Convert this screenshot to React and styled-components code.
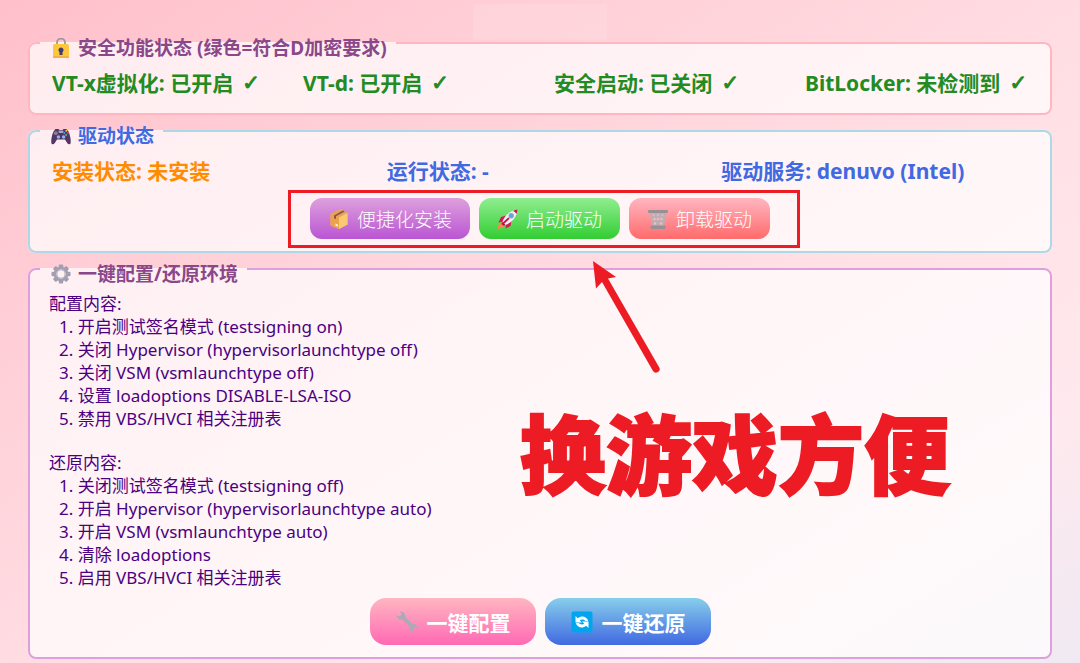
import React from "react";
import styled, { createGlobalStyle } from "styled-components";

const securityItems = [
  "VT-x虚拟化: 已开启",
  "VT-d: 已开启",
  "安全启动: 已关闭",
  "BitLocker: 未检测到",
];

const configSteps = [
  "开启测试签名模式 (testsigning on)",
  "关闭 Hypervisor (hypervisorlaunchtype off)",
  "关闭 VSM (vsmlaunchtype off)",
  "设置 loadoptions DISABLE-LSA-ISO",
  "禁用 VBS/HVCI 相关注册表",
];

const restoreSteps = [
  "关闭测试签名模式 (testsigning off)",
  "开启 Hypervisor (hypervisorlaunchtype auto)",
  "开启 VSM (vsmlaunchtype auto)",
  "清除 loadoptions",
  "启用 VBS/HVCI 相关注册表",
];

function LockIcon() {
  return (
    <Icon viewBox="0 0 20 20" $size={20}>
      <path d="M6 8V4.500a4 4 0 0 1 8 0V8" fill="none" stroke="#9b9b9b" strokeWidth="1.800" />
      <rect x="2" y="6" width="16" height="14" rx="1.500" fill="#fcc63d" />
      <rect x="2" y="18" width="16" height="2" rx="1" fill="#f5b13c" />
      <path d="M10 9.500a2.600 2.600 0 0 1 1.500 4.700V17h-3v-2.800A2.600 2.600 0 0 1 10 9.500z" fill="#433b6b" />
    </Icon>
  );
}

function GamepadIcon() {
  return (
    <Icon viewBox="0 0 20 20" $size={20}>
      <path
        d="M4.5 3h3l1 1h3l1-1h3l2 2.5c1.600 3.500 2.500 8 2.200 11.200-.3 2-2.500 2-3.500.3l-2.200-3.500H6L3.800 17c-1 1.700-3.200 1.700-3.500-.3C0 13.500.9 9 2.500 5.500z"
        fill="#533566"
      />
      <rect x="7.500" y="4.500" width="5" height="2.500" rx="1" fill="#a9a3c9" />
      <circle cx="4.800" cy="7.200" r="1.900" fill="#837f9c" />
      <circle cx="7.400" cy="11" r="1.700" fill="#8db7ef" />
      <circle cx="12.600" cy="11" r="1.700" fill="#8db7ef" />
      <circle cx="15.300" cy="4.800" r="1" fill="#f8c842" />
      <circle cx="17" cy="7" r="1.100" fill="#ed3b4c" />
      <circle cx="13.400" cy="6.900" r="1" fill="#3b9be8" />
      <circle cx="15.200" cy="8.900" r="1" fill="#49bd76" />
    </Icon>
  );
}

function GearIcon() {
  return (
    <Icon viewBox="0 0 20 20" $size={20}>
      {[0, 45, 90, 135, 180, 225, 270, 315].map((angle) => (
        <rect
          key={angle}
          x="7.800"
          y="0.500"
          width="4.400"
          height="5"
          rx="1"
          fill="#a29db0"
          transform={`rotate(${angle} 10 10)`}
        />
      ))}
      <circle cx="10" cy="10" r="5.500" fill="none" stroke="#a39eb1" strokeWidth="3.600" />
      <circle cx="10" cy="10" r="4.600" fill="none" stroke="#c3bdcc" strokeWidth="1" />
    </Icon>
  );
}

function PackageIcon() {
  return (
    <Icon viewBox="0 0 22 22" $size={22}>
      <path d="M2.500 6 12 1l7.500 4v11.500L11 21l-8.500-3.500z" fill="#f0ad55" />
      <path d="M2.500 6 12 1l7.500 4L11 9.500z" fill="#e5a45d" />
      <path d="M11 9.500 19.500 5v11.500L11 21z" fill="#fac971" />
      <path d="M2.500 6 11 9.500V21l-8.500-3.500z" fill="#eba24c" />
      <path d="M6 7.400 14.800 2.500l2 1L8 8.300v3l-2-1z" fill="#8f5447" />
      <path d="m7.500 15.500 2.500.9v2.400l-2.500-1z" fill="#fff0dc" />
    </Icon>
  );
}

function RocketIcon() {
  return (
    <Icon viewBox="0 0 22 22" $size={22}>
      <path d="M1 18 3 15l3-1 2.500 3-2.500 3-2-.500L1 21.500z" fill="#f78b4b" />
      <path d="M9.500 7.500 4 9l-2.500 5.500 5-1zM14.500 12.500 13.500 18 8.500 20.500l.5-5z" fill="#d51b4f" />
      <path d="M5.500 14C7 8.500 11.500 3 20.500 1.500 20 9.500 14 15 8.500 17z" fill="#f3eff7" />
      <path d="M16 2.900c1.500-.7 3-1.200 4.500-1.400-.1 1.700-.5 3.200-1.100 4.600C18.800 4.500 17.600 3.400 16 2.900z" fill="#c81545" />
      <path d="m5.500 14 3 3-2 .8-2-2z" fill="#83234e" />
      <circle cx="14.200" cy="7.800" r="2.700" fill="#8fa2bd" />
      <circle cx="14.200" cy="7.800" r="1.600" fill="#47aee8" />
      <path d="m5.500 16 6-5.500" stroke="#c81545" strokeWidth="1.800" strokeLinecap="round" />
    </Icon>
  );
}

function TrashIcon() {
  return (
    <Icon viewBox="0 0 22 22" $size={22}>
      <path d="M3 4.500h16L17 19H5z" fill="#bfadb3" />
      <path
        d="m5 6.500 1.500 1.500L8 6.500M9.500 6.500 11 8l1.500-1.500M14 6.500 15.500 8 17 6.500M6 11l1.500-1.500L9 11l-1.500 1.500zM9.500 11 11 9.500l1.500 1.500-1.500 1.500zM13 11l1.500-1.500L16 11l-1.500 1.500zM6.500 15.500 8 14l1.500 1.500L8 17zM12.500 15.500 14 14l1.500 1.500L14 17z"
        fill="#f0bfc5"
      />
      <rect x="1" y="2" width="20" height="3" rx="1" fill="#989096" />
      <rect x="3.500" y="17.500" width="15" height="3.500" rx="1" fill="#989096" />
    </Icon>
  );
}

function WrenchIcon() {
  return (
    <Icon viewBox="0 0 24 24" $size={24}>
      <path
        d="M5.200 1.500c3-.2 5.600 2.400 5.200 5.500l6.900 6.900c3-.4 5.500 1.900 5.700 5l-3.200-1.600-2.100 1.900 1.700 3.400c-3.200 0-5.600-2.700-5.100-5.800L7.400 9.900C4.400 10.300 1.600 8 1.200 5l3.300 1.500 2-1.900z"
        fill="#adaab8"
      />
    </Icon>
  );
}

function RestoreIcon() {
  return (
    <Icon viewBox="0 0 24 24" $size={24}>
      <rect x="1.500" y="1.500" width="21" height="21" rx="2" fill="#00a6ed" />
      <path d="M5.500 6v6.500H12l-2.300-2.300c1.800-1.200 4.300-.9 5.600.7h2.900C16.700 6.200 11.600 5 7.800 8.200z" fill="#fff" />
      <path d="M18.500 18v-6.500H12l2.300 2.300c-1.800 1.200-4.300.9-5.600-.7H5.800c1.500 4.700 6.600 5.900 10.400 2.700z" fill="#fff" />
    </Icon>
  );
}

function App() {
  return (
    <>
      <GlobalStyle />
      <Page>
        <TitlePatch />

        <Panel $border="#ffb6c1">
          <PanelTitle $color="#8b4789">
            <LockIcon />
            安全功能状态 (绿色=符合D加密要求)
          </PanelTitle>
          <StatusRow $columns={4}>
            {securityItems.map((item) => (
              <Status key={item} $color="#228b22">
                {item}
                <Check>✓</Check>
              </Status>
            ))}
          </StatusRow>
        </Panel>

        <Panel $border="#add8e6">
          <PanelTitle $color="#4169e1">
            <GamepadIcon />
            驱动状态
          </PanelTitle>
          <StatusRow $columns={3}>
            <Status $color="#ff8c00">安装状态: 未安装</Status>
            <Status $color="#4169e1">运行状态: -</Status>
            <Status $color="#4169e1">驱动服务: denuvo (Intel)</Status>
          </StatusRow>
          <ButtonRow>
            <DriverButton type="button" $from="#dda0dd" $to="#ba55d3">
              <PackageIcon />
              便捷化安装
            </DriverButton>
            <DriverButton type="button" $from="#90ee90" $to="#32cd32">
              <RocketIcon />
              启动驱动
            </DriverButton>
            <DriverButton type="button" $from="#ffb6c1" $to="#ff6b6b">
              <TrashIcon />
              卸载驱动
            </DriverButton>
            <Highlight />
            <Arrow viewBox="0 0 70 114">
              <path d="M2 1 25 17l-8 1.500L68 107a3.600 3.600 0 0 1-6 4L11 22l-6 6.500z" fill="#ed1c24" />
            </Arrow>
          </ButtonRow>
        </Panel>

        <Panel $border="#dda0dd">
          <PanelTitle $color="#8b4789">
            <GearIcon />
            一键配置/还原环境
          </PanelTitle>
          <Description>
            <section>
              <StepsHeading>配置内容:</StepsHeading>
              <Steps>
                {configSteps.map((step) => (
                  <li key={step}>{step}</li>
                ))}
              </Steps>
            </section>
            <section>
              <StepsHeading>还原内容:</StepsHeading>
              <Steps>
                {restoreSteps.map((step) => (
                  <li key={step}>{step}</li>
                ))}
              </Steps>
            </section>
            <Callout>换游戏方便</Callout>
          </Description>
          <ButtonRow>
            <ConfigButton type="button" $from="#ffb6c1" $to="#ff69b4">
              <WrenchIcon />
              一键配置
            </ConfigButton>
            <ConfigButton type="button" $from="#87ceeb" $to="#4169e1">
              <RestoreIcon />
              一键还原
            </ConfigButton>
          </ButtonRow>
        </Panel>
      </Page>
    </>
  );
}

const GlobalStyle = createGlobalStyle`
  * {
    box-sizing: border-box;
  }

  body {
    margin: 0;
    font-family: "Noto Sans", "Noto Sans CJK SC", sans-serif;
  }
`;

const Page = styled.main`
  display: flex;
  flex-direction: column;
  min-height: 100vh;
  padding: 4px 28px;
  background: linear-gradient(to bottom right, #ffc0cb 0%, #ffdfe4 55%, #ffe9ee 80%, #f0e9f3 100%);
`;

const TitlePatch = styled.div`
  align-self: center;
  width: 134px;
  height: 36px;
  margin-bottom: -13px;
  background: rgba(255, 255, 255, 0.12);
`;

const Panel = styled.fieldset`
  min-width: 0;
  margin: 0;
  padding: 8px 10px 12px;
  border: 2px solid ${(props) => props.$border};
  border-radius: 8px;
  background: rgba(255, 255, 255, 0.7);
`;

// the top padding drops the text a little below the border line
const PanelTitle = styled.legend`
  display: flex;
  align-items: center;
  gap: 7px;
  padding: 10px 9px 0 11px;
  font-size: 19px;
  font-weight: 700;
  line-height: 22px;
  color: ${(props) => props.$color};
`;

const StatusRow = styled.div`
  display: grid;
  grid-template-columns: repeat(${(props) => props.$columns}, 1fr);
  column-gap: 28px;
  padding: 2px 12px 4px;
`;

const Status = styled.span`
  display: flex;
  gap: 9px;
  font-size: 21px;
  font-weight: 700;
  line-height: 28px;
  white-space: nowrap;
  color: ${(props) => props.$color};
`;

const Check = styled.span`
  font-family: "DejaVu Sans", sans-serif;
  -webkit-text-stroke: 1px currentColor;
`;

const ButtonRow = styled.div`
  position: relative;
  display: flex;
  justify-content: center;
  gap: 9px;
  width: fit-content;
  margin: 9px auto 0;
`;

const Button = styled.button`
  display: flex;
  align-items: center;
  border: none;
  color: #ffffff;
  font-family: inherit;
  white-space: nowrap;
  cursor: pointer;
  background: linear-gradient(${(props) => props.$from}, ${(props) => props.$to});
`;

const DriverButton = styled(Button)`
  gap: 7px;
  height: 41px;
  padding: 0 18px;
  border-radius: 12px;
  font-size: 19px;
  font-weight: 300;
`;

const ConfigButton = styled(Button)`
  gap: 8px;
  height: 47px;
  padding: 0 25px;
  border-radius: 16px;
  font-size: 21px;
  font-weight: 700;
`;

const Icon = styled.svg`
  flex: none;
  width: ${(props) => props.$size}px;
  height: ${(props) => props.$size}px;
`;

const Description = styled.div`
  position: relative;
  display: flex;
  flex-direction: column;
  gap: 22px;
  padding: 0 9px;
  font-size: 17px;
  line-height: 23px;
  color: #4b0082;
`;

const StepsHeading = styled.p`
  margin: 0;
  line-height: 22px;
`;

const Steps = styled.ol`
  margin: 0;
  padding: 0 0 0 10px;
  list-style: decimal inside;
`;

const Highlight = styled.div`
  position: absolute;
  inset: -8px -30px -9px -22px;
  border: 3px solid #ed1c24;
  pointer-events: none;
`;

const Arrow = styled.svg`
  position: absolute;
  left: 281px;
  top: 62px;
  width: 70px;
  height: 114px;
  pointer-events: none;
`;

const Callout = styled.strong`
  position: absolute;
  left: 48%;
  top: 112px;
  font-size: 86px;
  font-weight: 900;
  line-height: 100px;
  white-space: nowrap;
  color: #ed1c24;
  -webkit-text-stroke: 2px #ed1c24;
`;

export default App;
